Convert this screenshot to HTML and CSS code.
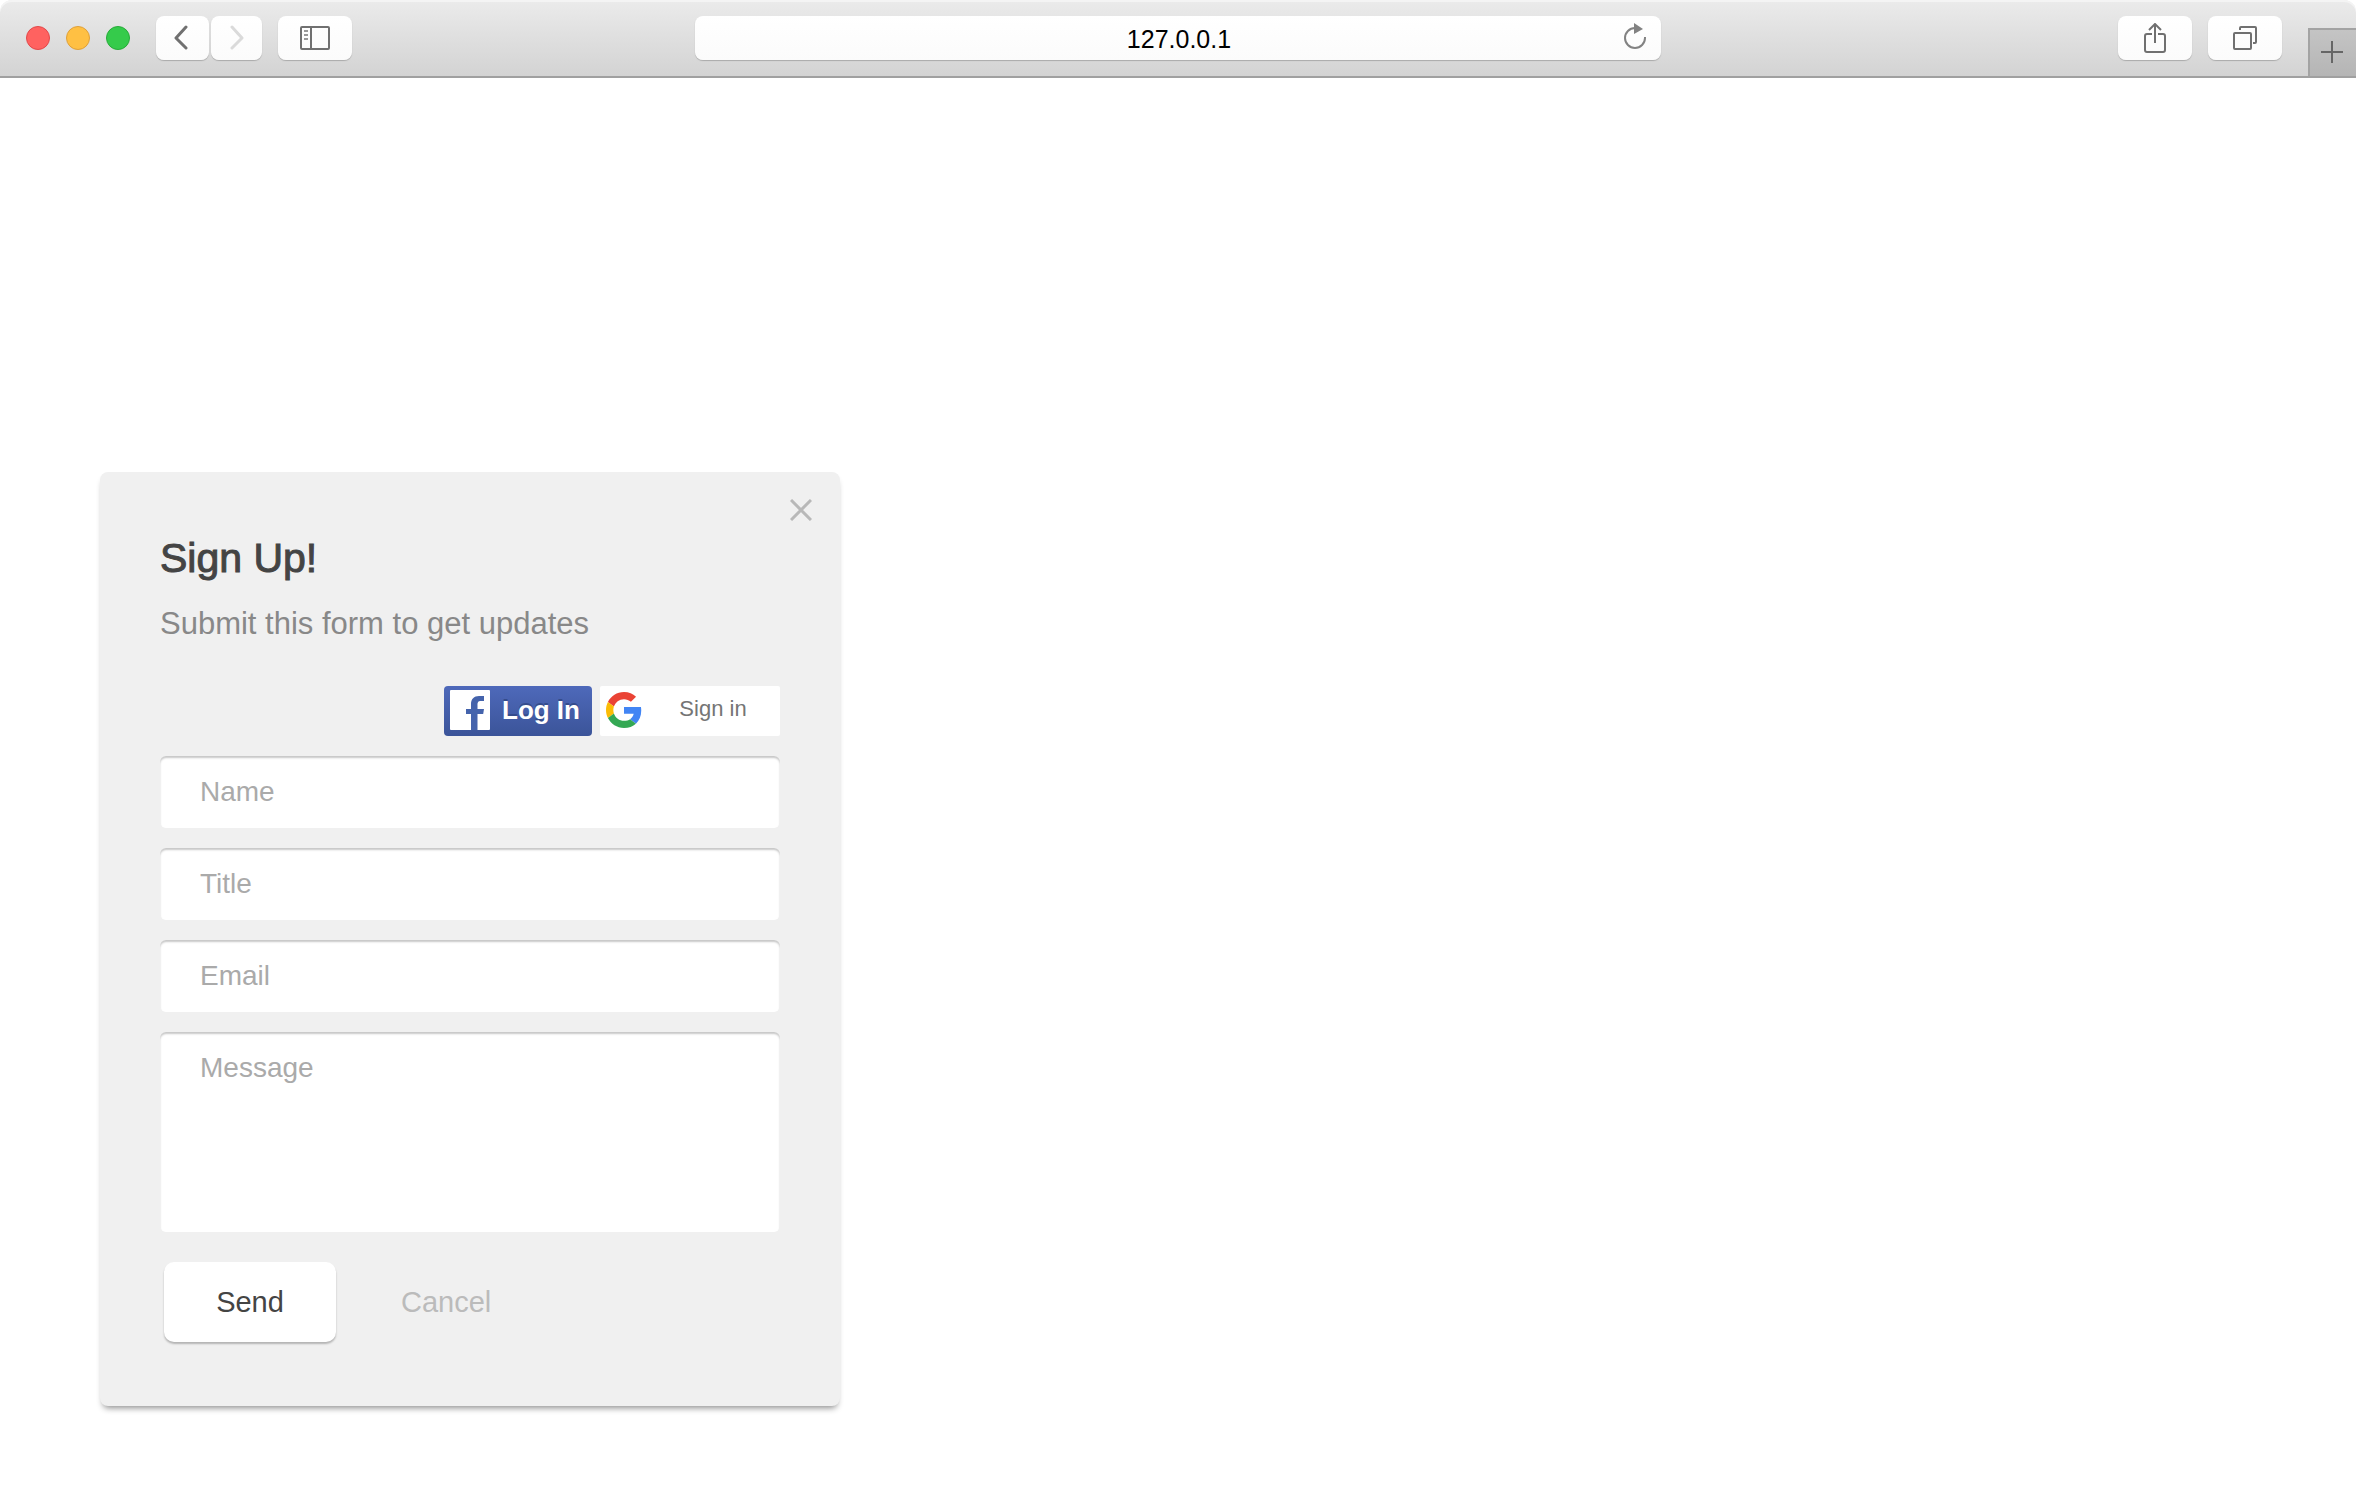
FILE: index.html
```html
<!DOCTYPE html>
<html lang="en">
<head>
<meta charset="utf-8">
<title>Sign Up</title>
<link rel="stylesheet" href="styles.css">
</head>
<body>
<header class="toolbar">
  <div class="tools">
    <div class="lights">
      <button class="light light-close" aria-label="Close window"></button>
      <button class="light light-min" aria-label="Minimize window"></button>
      <button class="light light-zoom" aria-label="Zoom window"></button>
    </div>
    <nav class="nav">
      <button class="tool tool-back" aria-label="Back">
        <svg width="16" height="26" viewBox="0 0 16 26" fill="none" stroke="#707070" stroke-width="3" stroke-linecap="round" stroke-linejoin="round"><path d="M13 2 3 13l10 10"/></svg>
      </button>
      <button class="tool tool-forward" aria-label="Forward">
        <svg width="16" height="26" viewBox="0 0 16 26" fill="none" stroke="#dadada" stroke-width="3" stroke-linecap="round" stroke-linejoin="round"><path d="m3 2 10 11L3 23"/></svg>
      </button>
    </nav>
    <button class="tool" aria-label="Sidebar">
      <svg width="30" height="24" viewBox="0 0 30 24" fill="none" stroke="#707070" stroke-width="2"><rect x="1" y="1" width="28" height="22" rx="1"/><path d="M11 1v22"/><path stroke="#999" d="M4 5h4M4 9h4M4 13h4"/></svg>
    </button>
  </div>
  <div class="address">
    <input class="url" type="text" value="127.0.0.1" aria-label="Address">
    <button class="reload" aria-label="Reload">
      <svg width="22" height="26" viewBox="0 0 22 26"><path d="M11 5a10 10 0 1 0 10 10v-1" fill="none" stroke="#828282" stroke-width="2"/><path d="M10 0v11l9-5z" fill="#828282"/></svg>
    </button>
  </div>
  <div class="tools tools-end">
    <button class="tool" aria-label="Share">
      <svg width="22" height="30" viewBox="0 0 22 30" fill="none" stroke="#707070" stroke-width="2"><path d="M8 11H3q-2 0-2 2v14q0 2 2 2h16q2 0 2-2V13q0-2-2-2h-5"/><path d="M11 20V2M5 7l6-6 6 6"/></svg>
    </button>
    <button class="tool" aria-label="Show tabs">
      <svg width="24" height="24" viewBox="0 0 24 24" fill="none" stroke="#707070" stroke-width="2"><rect x="1" y="7" width="17" height="16" rx="1"/><path d="M7 4V2q0-1 1-1h14q1 0 1 1v14q0 1-1 1h-2"/></svg>
    </button>
    <button class="new-tab" aria-label="New tab">
      <svg width="22" height="22" viewBox="0 0 22 22" stroke="#666" stroke-width="2"><path d="M11 0v22M0 11h22"/></svg>
    </button>
  </div>
</header>

<main class="page">
  <form class="card">
    <button class="close" type="button" aria-label="Close">
      <svg width="22" height="22" viewBox="0 0 22 22" stroke="#b8b8b8" stroke-width="3"><path d="m1 1 20 20M21 1 1 21"/></svg>
    </button>
    <h1 class="title">Sign Up!</h1>
    <p class="subtitle">Submit this form to get updates</p>
    <div class="social">
      <button class="facebook" type="button">
        <svg width="40" height="40" viewBox="0 0 40 40"><rect width="40" height="40" rx="1" fill="#fff"/><path fill="#4463ac" d="M21 40V24h-5v-5h5v-5c0-5 3-8 8-8h5v5h-3c-3 0-3.500 1.500-3.500 4v4H34l-.8 5h-5.700v16z"/></svg>
        <span>Log In</span>
      </button>
      <button class="google" type="button">
        <svg width="36" height="36" viewBox="0 0 48 48"><path fill="#EA4335" d="M24 9.500c3.540 0 6.710 1.220 9.210 3.600l6.850-6.850C35.900 2.380 30.470 0 24 0 14.620 0 6.510 5.380 2.560 13.220l7.980 6.190C12.430 13.720 17.740 9.500 24 9.500z"/><path fill="#4285F4" d="M46.980 24.550c0-1.570-.15-3.090-.38-4.550H24v9.020h12.940c-.58 2.960-2.260 5.480-4.780 7.180l7.730 6c4.510-4.180 7.090-10.360 7.090-17.650z"/><path fill="#FBBC05" d="M10.530 28.590c-.48-1.450-.76-2.990-.76-4.590s.27-3.140.76-4.590l-7.980-6.190C.92 16.460 0 20.120 0 24c0 3.880.92 7.540 2.560 10.780l7.970-6.190z"/><path fill="#34A853" d="M24 48c6.480 0 11.930-2.130 15.890-5.810l-7.730-6c-2.150 1.450-4.920 2.300-8.160 2.300-6.260 0-11.570-4.220-13.470-9.910l-7.980 6.190C6.510 42.620 14.620 48 24 48z"/></svg>
        <span class="google-label">Sign in</span>
      </button>
    </div>
    <div class="fields">
      <input class="field" type="text" placeholder="Name" aria-label="Name">
      <input class="field" type="text" placeholder="Title" aria-label="Title">
      <input class="field" type="email" placeholder="Email" aria-label="Email">
      <textarea class="field message" placeholder="Message" aria-label="Message"></textarea>
    </div>
    <div class="actions">
      <button class="send" type="submit">Send</button>
      <button class="cancel" type="reset">Cancel</button>
    </div>
  </form>
</main>
</body>
</html>
```
FILE: styles.css
```css
* {
  box-sizing: border-box;
}

body {
  margin: 0;
  background: #fff;
  font-family: "Liberation Sans", Arial, sans-serif;
}

button,
input,
textarea {
  margin: 0;
  padding: 0;
  border: 0;
  background: none;
  font: inherit;
}

svg {
  display: block;
  flex: none;
}

/* Browser toolbar */

.toolbar {
  display: grid;
  grid-template-columns: 1fr minmax(0, 966px) 1fr;
  align-items: center;
  height: 78px;
  border-bottom: 2px solid #a0a0a0;
  border-radius: 12px 12px 0 0;
  background: linear-gradient(#ebebeb, #d3d3d3);
  box-shadow: inset 0 2px 0 #f4f4f4;
  overflow: hidden;
}

.tools {
  display: flex;
  align-items: center;
  gap: 16px;
  height: 76px;
  padding-left: 26px;
}

.tools-end {
  justify-content: flex-end;
}

.lights {
  display: flex;
  gap: 16px;
  margin-right: 10px;
}

.light {
  width: 24px;
  height: 24px;
  border: 1px solid;
  border-radius: 50%;
}

.light-close {
  border-color: #e2484a;
  background: #ff6260;
}

.light-min {
  border-color: #dfa03a;
  background: #ffc043;
}

.light-zoom {
  border-color: #27ab39;
  background: #35cb4b;
}

.nav {
  display: flex;
  gap: 2px;
}

.tool {
  display: flex;
  align-items: center;
  justify-content: center;
  width: 74px;
  height: 44px;
  border-radius: 8px;
  background: linear-gradient(#fff, #fbfbfb);
  box-shadow: 0 1px 1px #aaa;
}

.tool-back {
  width: 53px;
  padding-right: 3px;
}

.tool-forward {
  width: 51px;
}

.address {
  display: flex;
  align-items: center;
  height: 44px;
  padding: 0 15px 0 39px;
  border-radius: 8px;
  background: linear-gradient(#fff, #fbfbfb);
  box-shadow: 0 1px 1px #aaa;
}

.url {
  flex: 1;
  min-width: 0;
  height: 44px;
  padding-top: 2px;
  color: #000;
  font-size: 25px;
  text-align: center;
}

.reload {
  padding-bottom: 4px;
}

.new-tab {
  display: flex;
  align-items: center;
  justify-content: center;
  align-self: flex-end;
  width: 48px;
  height: 48px;
  margin-left: 10px;
  padding: 0 2px 2px 0;
  border: solid #a3a3a3;
  border-width: 2px 0 0 2px;
  background: linear-gradient(#c4c4c4, #b5b5b5);
}

/* Sign-up card */

.page {
  padding: 394px 100px 100px;
}

.card {
  position: relative;
  max-width: 740px;
  padding: 60px 60px 64px;
  border-radius: 8px;
  background: #f0f0f0;
  box-shadow: 0 5px 6px -3px rgba(0, 0, 0, 0.45);
}

.close {
  position: absolute;
  top: 27px;
  right: 28px;
}

.title {
  margin: 0;
  color: #444;
  font-size: 41px;
  font-weight: 400;
  line-height: 52px;
  -webkit-text-stroke: 1px #444;
}

.subtitle {
  margin: 20px 0 0;
  color: #888;
  font-size: 31px;
  line-height: 40px;
}

.social {
  display: flex;
  justify-content: flex-end;
  gap: 8px;
  margin-top: 42px;
}

.facebook,
.google {
  display: flex;
  align-items: center;
  height: 50px;
}

.facebook {
  gap: 12px;
  width: 148px;
  padding: 0 6px 2px;
  border-radius: 4px;
  background: linear-gradient(#4e69ba, #3b5499);
  color: #fff;
  font-size: 26px;
  font-weight: 700;
  text-shadow: 0 -2px 0 #354c8c;
  white-space: nowrap;
}

.google {
  width: 180px;
  padding: 0 6px 2px;
  border-radius: 2px;
  background: #fff;
  color: #757575;
  font-size: 22px;
}

.google-label {
  flex: 1;
  padding: 0 0 2px 10px;
}

.fields {
  display: flex;
  flex-direction: column;
  gap: 20px;
  margin-top: 20px;
}

.field {
  display: block;
  width: 100%;
  height: 72px;
  padding: 0 40px;
  border-radius: 6px;
  background: #fff;
  box-shadow: inset 0 2px 2px #c8c8c8;
  color: #444;
  font-size: 28px;
  line-height: 32px;
}

.field::placeholder {
  color: #aaa;
  opacity: 1;
}

.message {
  height: 200px;
  padding-top: 20px;
  resize: none;
}

.actions {
  display: flex;
  gap: 12px;
  margin-top: 30px;
  padding-left: 4px;
  font-size: 29px;
}

.send,
.cancel {
  height: 80px;
  border-radius: 10px;
}

.send {
  width: 172px;
  background: #fff;
  box-shadow: 0 2px 2px rgba(0, 0, 0, 0.25);
  color: #444;
}

.cancel {
  padding: 0 53px;
  color: #bbb;
}
```
